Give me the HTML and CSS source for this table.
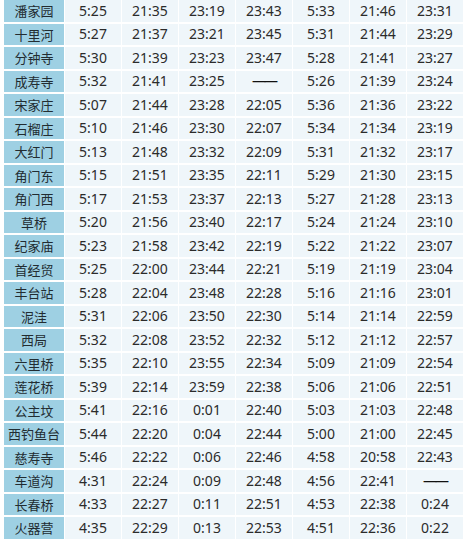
FILE: index.html
```html
<!DOCTYPE html>
<html lang="zh">
<head>
<meta charset="utf-8">
<link rel="stylesheet" href="styles.css">
</head>
<body>
<div class="table">
<div class="row"><div class="name">潘家园</div><div>5:25</div><div>21:35</div><div>23:19</div><div>23:43</div><div>5:33</div><div>21:46</div><div>23:31</div></div>
<div class="row"><div class="name">十里河</div><div>5:27</div><div>21:37</div><div>23:21</div><div>23:45</div><div>5:31</div><div>21:44</div><div>23:29</div></div>
<div class="row"><div class="name">分钟寺</div><div>5:30</div><div>21:39</div><div>23:23</div><div>23:47</div><div>5:28</div><div>21:41</div><div>23:27</div></div>
<div class="row"><div class="name">成寿寺</div><div>5:32</div><div>21:41</div><div>23:25</div><div class="dash">——</div><div>5:26</div><div>21:39</div><div>23:24</div></div>
<div class="row"><div class="name">宋家庄</div><div>5:07</div><div>21:44</div><div>23:28</div><div>22:05</div><div>5:36</div><div>21:36</div><div>23:22</div></div>
<div class="row"><div class="name">石榴庄</div><div>5:10</div><div>21:46</div><div>23:30</div><div>22:07</div><div>5:34</div><div>21:34</div><div>23:19</div></div>
<div class="row"><div class="name">大红门</div><div>5:13</div><div>21:48</div><div>23:32</div><div>22:09</div><div>5:31</div><div>21:32</div><div>23:17</div></div>
<div class="row"><div class="name">角门东</div><div>5:15</div><div>21:51</div><div>23:35</div><div>22:11</div><div>5:29</div><div>21:30</div><div>23:15</div></div>
<div class="row"><div class="name">角门西</div><div>5:17</div><div>21:53</div><div>23:37</div><div>22:13</div><div>5:27</div><div>21:28</div><div>23:13</div></div>
<div class="row"><div class="name">草桥</div><div>5:20</div><div>21:56</div><div>23:40</div><div>22:17</div><div>5:24</div><div>21:24</div><div>23:10</div></div>
<div class="row"><div class="name">纪家庙</div><div>5:23</div><div>21:58</div><div>23:42</div><div>22:19</div><div>5:22</div><div>21:22</div><div>23:07</div></div>
<div class="row"><div class="name">首经贸</div><div>5:25</div><div>22:00</div><div>23:44</div><div>22:21</div><div>5:19</div><div>21:19</div><div>23:04</div></div>
<div class="row"><div class="name">丰台站</div><div>5:28</div><div>22:04</div><div>23:48</div><div>22:28</div><div>5:16</div><div>21:16</div><div>23:01</div></div>
<div class="row"><div class="name">泥洼</div><div>5:31</div><div>22:06</div><div>23:50</div><div>22:30</div><div>5:14</div><div>21:14</div><div>22:59</div></div>
<div class="row"><div class="name">西局</div><div>5:32</div><div>22:08</div><div>23:52</div><div>22:32</div><div>5:12</div><div>21:12</div><div>22:57</div></div>
<div class="row"><div class="name">六里桥</div><div>5:35</div><div>22:10</div><div>23:55</div><div>22:34</div><div>5:09</div><div>21:09</div><div>22:54</div></div>
<div class="row"><div class="name">莲花桥</div><div>5:39</div><div>22:14</div><div>23:59</div><div>22:38</div><div>5:06</div><div>21:06</div><div>22:51</div></div>
<div class="row"><div class="name">公主坟</div><div>5:41</div><div>22:16</div><div>0:01</div><div>22:40</div><div>5:03</div><div>21:03</div><div>22:48</div></div>
<div class="row"><div class="name">西钓鱼台</div><div>5:44</div><div>22:20</div><div>0:04</div><div>22:44</div><div>5:00</div><div>21:00</div><div>22:45</div></div>
<div class="row"><div class="name">慈寿寺</div><div>5:46</div><div>22:22</div><div>0:06</div><div>22:46</div><div>4:58</div><div>20:58</div><div>22:43</div></div>
<div class="row"><div class="name">车道沟</div><div>4:31</div><div>22:24</div><div>0:09</div><div>22:48</div><div>4:56</div><div>22:41</div><div class="dash">——</div></div>
<div class="row"><div class="name">长春桥</div><div>4:33</div><div>22:27</div><div>0:11</div><div>22:51</div><div>4:53</div><div>22:38</div><div>0:24</div></div>
<div class="row"><div class="name">火器营</div><div>4:35</div><div>22:29</div><div>0:13</div><div>22:53</div><div>4:51</div><div>22:36</div><div>0:22</div></div>
</div>
</body>
</html>
```

FILE: styles.css
```css
html, body {
  margin: 0;
  padding: 0;
  background: #ffffff;
}
body {
  padding: 0 4px;
  font-family: "Noto Sans", "Noto Sans CJK SC", sans-serif;
  font-size: 14px;
  color: #2b2b2b;
}
.table {
  display: flex;
  flex-direction: column;
  row-gap: 2px;
  width: 459px;
}
.row {
  display: grid;
  grid-template-columns: 60px repeat(7, 56px);
  column-gap: 1px;
  height: 21.5px;
}
.row > div {
  background: #eff6fa;
  display: flex;
  align-items: center;
  justify-content: center;
  line-height: 1;
}
.row > .name {
  background: #9ed0e3;
  font-family: "Noto Sans CJK SC", sans-serif;
  font-size: 13px;
  color: #222c31;
}
.row > .dash {
  letter-spacing: -2px;
  color: #111;
}
```
